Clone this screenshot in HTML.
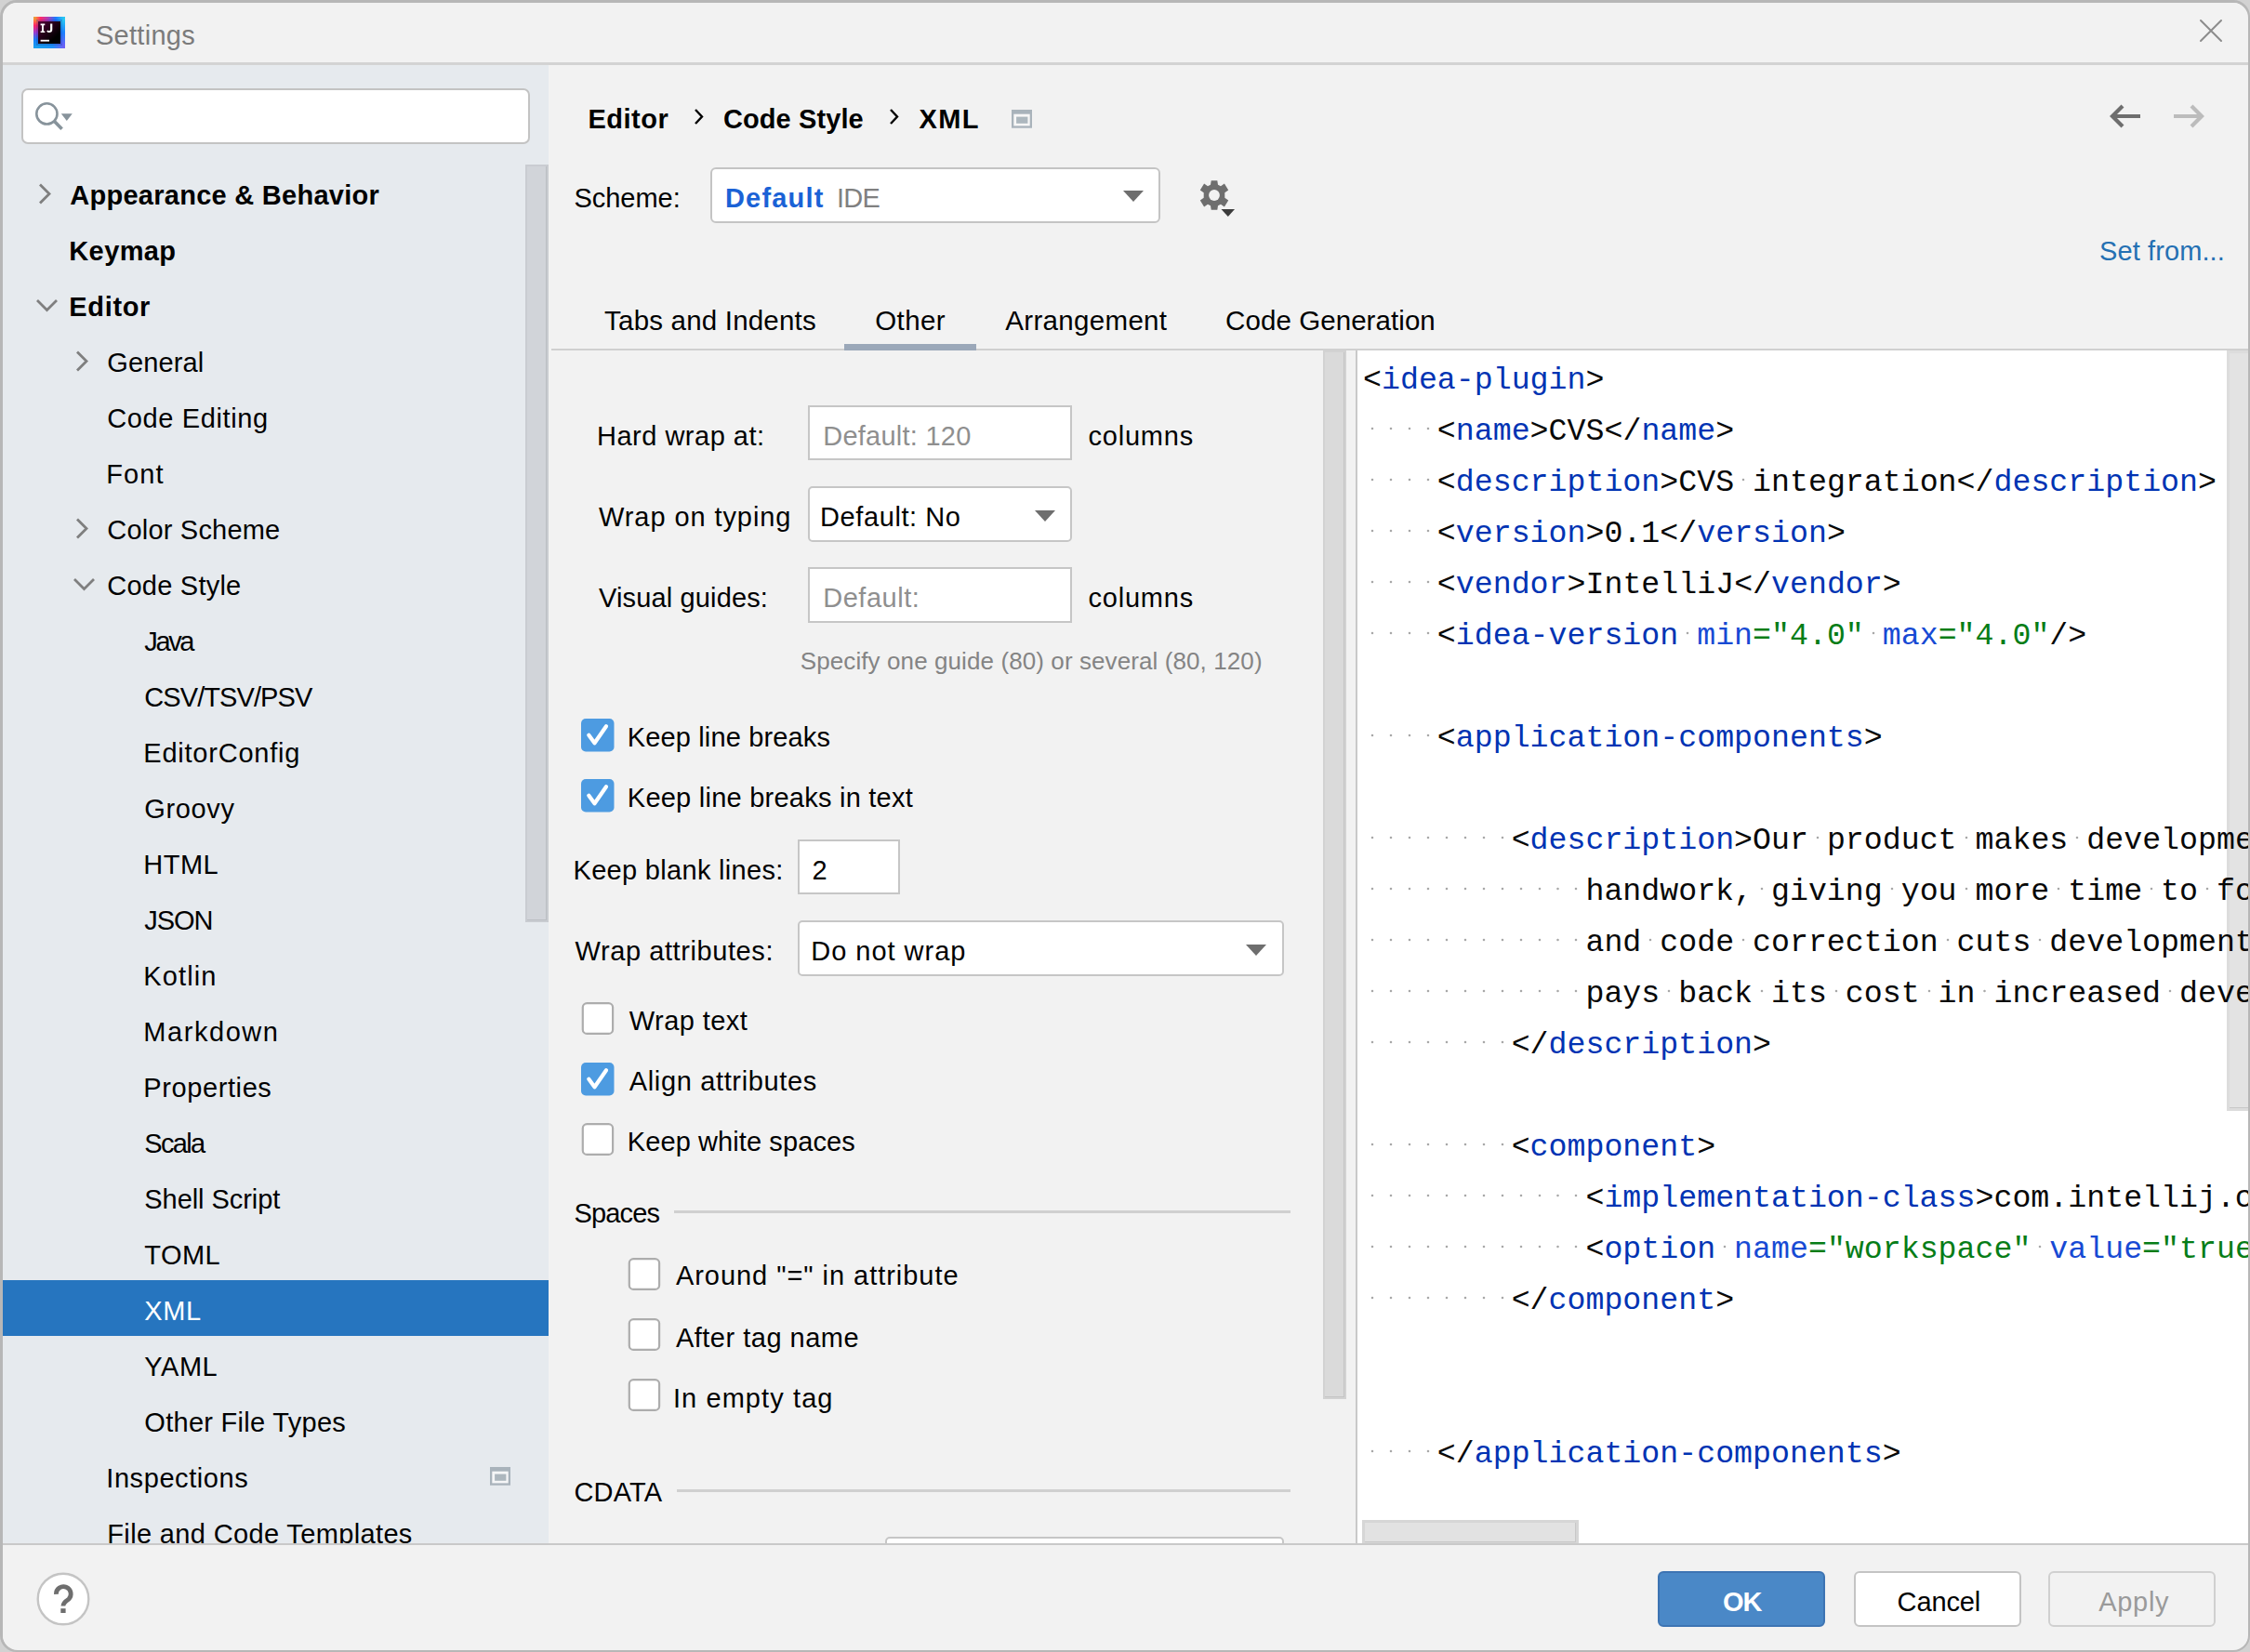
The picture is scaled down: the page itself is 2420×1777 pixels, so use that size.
<!DOCTYPE html>
<html><head><meta charset="utf-8"><title>Settings</title>
<style>
html,body{margin:0;padding:0;width:2420px;height:1777px;overflow:hidden;background:#d2d2d2;}
#win{position:absolute;left:0;top:0;width:2420px;height:1777px;box-sizing:border-box;border:3px solid #b7b7b7;border-radius:18px;background:#f2f2f2}
.t{position:absolute;line-height:1;white-space:pre;font-family:'Liberation Sans', sans-serif}
.d{display:inline-block;width:1ch;height:33px;vertical-align:top;background:radial-gradient(circle at 50% 13px,#a8a8a8 0,#a8a8a8 0.8px,rgba(168,168,168,0) 1.7px)}
.c{position:absolute;left:6px;line-height:1;white-space:pre;font-family:'Liberation Mono', monospace;font-size:33.25px}
</style></head><body>
<div id="win"></div>
<div style="position:absolute;left:3px;top:3px;width:2415px;height:64px;background:#f2f2f2;border-radius:16px 16px 0 0"></div>
<div style="position:absolute;left:3px;top:67px;width:2415px;height:3px;background:#d3d3d3"></div>
<svg style="position:absolute;left:36px;top:18px" width="34" height="34" viewBox="0 0 34 34"><defs>
<linearGradient id="gt" x1="0" y1="0" x2="1" y2="0"><stop offset="0" stop-color="#ffb81c"/><stop offset="0.22" stop-color="#ff2a6a"/><stop offset="0.45" stop-color="#b13bb5"/><stop offset="0.7" stop-color="#1b78ff"/><stop offset="1" stop-color="#2ad8f0"/></linearGradient>
<linearGradient id="gl" x1="0" y1="0" x2="0" y2="1"><stop offset="0" stop-color="#ffb81c"/><stop offset="0.28" stop-color="#ff2468"/><stop offset="0.5" stop-color="#9a3bd0"/><stop offset="0.72" stop-color="#1a7cf8"/><stop offset="1" stop-color="#17a3ee"/></linearGradient>
<linearGradient id="gb" x1="0" y1="0" x2="1" y2="0"><stop offset="0" stop-color="#17a3ee"/><stop offset="0.6" stop-color="#1d8ff5"/><stop offset="1" stop-color="#7a5af5"/></linearGradient>
<linearGradient id="gr" x1="0" y1="0" x2="0" y2="1"><stop offset="0" stop-color="#2ad8f0"/><stop offset="0.5" stop-color="#1a80ff"/><stop offset="1" stop-color="#7a5af5"/></linearGradient>
<linearGradient id="gk" x1="0" y1="0" x2="1" y2="1"><stop offset="0" stop-color="#520038"/><stop offset="0.75" stop-color="#000"/></linearGradient></defs>
<rect x="0" y="0" width="34" height="34" fill="#3a7cf0"/><polygon points="0,0 34,0 29,5 5,5" fill="url(#gt)"/><polygon points="0,0 5,5 5,29 0,34" fill="url(#gl)"/>
<polygon points="0,34 5,29 29,29 34,34" fill="url(#gb)"/><polygon points="34,0 29,5 29,29 34,34" fill="url(#gr)"/>
<rect x="4" y="4" width="26" height="26" fill="none" stroke="rgba(0,20,120,0.18)" stroke-width="2"/>
<rect x="5" y="5" width="24" height="24" fill="url(#gk)"/>
<path d="M7.6 7.6 H12.3 V9.2 H10.9 V15.4 H12.3 V17 H7.6 V15.4 H9.0 V9.2 H7.6 Z" fill="#fff"/>
<path d="M18.1 7.6 H20.3 V13.8 Q20.3 17.1 16.9 17.1 Q15.0 17.1 14.1 15.6 L15.5 14.6 Q16.0 15.3 16.9 15.3 Q18.1 15.3 18.1 13.6 Z" fill="#fff"/>
<rect x="7.6" y="24.8" width="9.4" height="1.8" fill="#fff"/></svg>
<div class="t" style="left:103.00px;top:24px;font-size:29px;font-weight:400;color:#7b7b7b;font-family:'Liberation Sans', sans-serif;letter-spacing:0.271px;">Settings</div>
<svg style="position:absolute;left:2364px;top:19px" width="28" height="28" viewBox="0 0 28 28"><path d="M3 3 L25 25 M25 3 L3 25" stroke="#8c8c8c" stroke-width="2" stroke-linecap="round"/></svg>
<div style="position:absolute;left:3px;top:70px;width:587px;height:1590px;background:#e6eaee"></div>
<div style="position:absolute;left:23px;top:95px;width:547px;height:60px;background:#fff;border:2.5px solid #c3c3c3;border-radius:7px;box-sizing:border-box"></div>
<svg style="position:absolute;left:34px;top:106px" width="48" height="40" viewBox="0 0 48 40"><circle cx="16.4" cy="16.4" r="11.1" fill="none" stroke="#87939b" stroke-width="2.6"/><path d="M24.5 24.5 L32.6 32.8" stroke="#87939b" stroke-width="3.6"/><path d="M31.8 16.2 L43.8 16.2 L37.8 24 Z" fill="#87939b"/></svg>
<div style="position:absolute;left:565px;top:177px;width:25px;height:815px;background:#d1d4d9;border:2px solid #c9ccd1;box-sizing:border-box"></div>
<div style="position:absolute;left:567px;top:989px;width:21px;height:1px;background:#babec2"></div>
<div style="position:absolute;left:587px;top:179px;width:1px;height:811px;background:#babec2"></div>
<div style="position:absolute;left:3px;top:1377px;width:587px;height:60px;background:#2675bf"></div>
<div style="position:absolute;left:0;top:70px;width:590px;height:1590px;overflow:hidden">
<div class="t" style="left:75.30px;top:126px;font-size:29px;font-weight:700;color:#000;font-family:'Liberation Sans', sans-serif;letter-spacing:0.265px;">Appearance &amp; Behavior</div>
<svg style="position:absolute;left:40px;top:126px" width="18" height="26" viewBox="0 0 18 26"><path d="M3 2.5 L13 12.5 L3 22.5" fill="none" stroke="#7f7f7f" stroke-width="2.8"/></svg>
<div class="t" style="left:74.30px;top:186px;font-size:29px;font-weight:700;color:#000;font-family:'Liberation Sans', sans-serif;letter-spacing:0.380px;">Keymap</div>
<div class="t" style="left:74.30px;top:246px;font-size:29px;font-weight:700;color:#000;font-family:'Liberation Sans', sans-serif;letter-spacing:0.660px;">Editor</div>
<svg style="position:absolute;left:38px;top:250px" width="26" height="18" viewBox="0 0 26 18"><path d="M2 3 L12.5 13.5 L23 3" fill="none" stroke="#7f7f7f" stroke-width="2.8"/></svg>
<div class="t" style="left:115.30px;top:306px;font-size:29px;font-weight:400;color:#000;font-family:'Liberation Sans', sans-serif;letter-spacing:0.133px;">General</div>
<svg style="position:absolute;left:80px;top:306px" width="18" height="26" viewBox="0 0 18 26"><path d="M3 2.5 L13 12.5 L3 22.5" fill="none" stroke="#7f7f7f" stroke-width="2.8"/></svg>
<div class="t" style="left:115.30px;top:366px;font-size:29px;font-weight:400;color:#000;font-family:'Liberation Sans', sans-serif;letter-spacing:0.618px;">Code Editing</div>
<div class="t" style="left:114.30px;top:426px;font-size:29px;font-weight:400;color:#000;font-family:'Liberation Sans', sans-serif;letter-spacing:1.067px;">Font</div>
<div class="t" style="left:115.30px;top:486px;font-size:29px;font-weight:400;color:#000;font-family:'Liberation Sans', sans-serif;letter-spacing:0.200px;">Color Scheme</div>
<svg style="position:absolute;left:80px;top:486px" width="18" height="26" viewBox="0 0 18 26"><path d="M3 2.5 L13 12.5 L3 22.5" fill="none" stroke="#7f7f7f" stroke-width="2.8"/></svg>
<div class="t" style="left:115.30px;top:546px;font-size:29px;font-weight:400;color:#000;font-family:'Liberation Sans', sans-serif;letter-spacing:0.233px;">Code Style</div>
<svg style="position:absolute;left:78px;top:550px" width="26" height="18" viewBox="0 0 26 18"><path d="M2 3 L12.5 13.5 L23 3" fill="none" stroke="#7f7f7f" stroke-width="2.8"/></svg>
<div class="t" style="left:155.30px;top:606px;font-size:29px;font-weight:400;color:#000;font-family:'Liberation Sans', sans-serif;letter-spacing:-2.400px;">Java</div>
<div class="t" style="left:155.30px;top:666px;font-size:29px;font-weight:400;color:#000;font-family:'Liberation Sans', sans-serif;letter-spacing:-0.920px;">CSV/TSV/PSV</div>
<div class="t" style="left:154.30px;top:726px;font-size:29px;font-weight:400;color:#000;font-family:'Liberation Sans', sans-serif;letter-spacing:0.773px;">EditorConfig</div>
<div class="t" style="left:155.30px;top:786px;font-size:29px;font-weight:400;color:#000;font-family:'Liberation Sans', sans-serif;letter-spacing:0.640px;">Groovy</div>
<div class="t" style="left:154.30px;top:846px;font-size:29px;font-weight:400;color:#000;font-family:'Liberation Sans', sans-serif;letter-spacing:0.467px;">HTML</div>
<div class="t" style="left:155.30px;top:906px;font-size:29px;font-weight:400;color:#000;font-family:'Liberation Sans', sans-serif;letter-spacing:-1.067px;">JSON</div>
<div class="t" style="left:154.30px;top:966px;font-size:29px;font-weight:400;color:#000;font-family:'Liberation Sans', sans-serif;letter-spacing:1.100px;">Kotlin</div>
<div class="t" style="left:154.30px;top:1026px;font-size:29px;font-weight:400;color:#000;font-family:'Liberation Sans', sans-serif;letter-spacing:1.557px;">Markdown</div>
<div class="t" style="left:154.30px;top:1086px;font-size:29px;font-weight:400;color:#000;font-family:'Liberation Sans', sans-serif;letter-spacing:0.600px;">Properties</div>
<div class="t" style="left:155.30px;top:1146px;font-size:29px;font-weight:400;color:#000;font-family:'Liberation Sans', sans-serif;letter-spacing:-1.650px;">Scala</div>
<div class="t" style="left:155.30px;top:1206px;font-size:29px;font-weight:400;color:#000;font-family:'Liberation Sans', sans-serif;letter-spacing:-0.064px;">Shell Script</div>
<div class="t" style="left:155.30px;top:1266px;font-size:29px;font-weight:400;color:#000;font-family:'Liberation Sans', sans-serif;letter-spacing:0.467px;">TOML</div>
<div class="t" style="left:155.30px;top:1326px;font-size:29px;font-weight:400;color:#fff;font-family:'Liberation Sans', sans-serif;letter-spacing:0.600px;">XML</div>
<div class="t" style="left:155.30px;top:1386px;font-size:29px;font-weight:400;color:#000;font-family:'Liberation Sans', sans-serif;letter-spacing:0.533px;">YAML</div>
<div class="t" style="left:155.30px;top:1446px;font-size:29px;font-weight:400;color:#000;font-family:'Liberation Sans', sans-serif;letter-spacing:0.287px;">Other File Types</div>
<div class="t" style="left:114.30px;top:1506px;font-size:29px;font-weight:400;color:#000;font-family:'Liberation Sans', sans-serif;letter-spacing:0.570px;">Inspections</div>
<div class="t" style="left:115.30px;top:1566px;font-size:29px;font-weight:400;color:#000;font-family:'Liberation Sans', sans-serif;letter-spacing:0.355px;">File and Code Templates</div>
</div>
<svg style="position:absolute;left:526.5px;top:1578px" width="22" height="20" viewBox="0 0 22 20"><rect x="0" y="0" width="22" height="19.7" fill="#a9b3bb"/><rect x="2.3" y="4.7" width="17.4" height="12.7" fill="#f5f6f7"/><rect x="5.1" y="7.6" width="12.3" height="7.2" fill="#adb7be"/></svg>
<div style="position:absolute;left:590px;top:70px;width:1828px;height:1590px;background:#f2f2f2"></div>
<div class="t" style="left:632.40px;top:114px;font-size:29px;font-weight:700;color:#000;font-family:'Liberation Sans', sans-serif;letter-spacing:0.500px;">Editor</div>
<svg style="position:absolute;left:745px;top:116px" width="14" height="20" viewBox="0 0 14 20"><path d="M3 2 L10 9.5 L3 17" fill="none" stroke="#000" stroke-width="2.4"/></svg>
<div class="t" style="left:777.90px;top:114px;font-size:29px;font-weight:700;color:#000;font-family:'Liberation Sans', sans-serif;letter-spacing:0.100px;">Code Style</div>
<svg style="position:absolute;left:955px;top:116px" width="14" height="20" viewBox="0 0 14 20"><path d="M3 2 L10 9.5 L3 17" fill="none" stroke="#000" stroke-width="2.4"/></svg>
<div class="t" style="left:988.40px;top:114px;font-size:29px;font-weight:700;color:#000;font-family:'Liberation Sans', sans-serif;letter-spacing:1.400px;">XML</div>
<svg style="position:absolute;left:1088px;top:118px" width="22" height="20" viewBox="0 0 22 20"><rect x="0" y="0" width="22" height="19.7" fill="#a9b3bb"/><rect x="2.3" y="4.7" width="17.4" height="12.7" fill="#f7f7f7"/><rect x="5.1" y="7.6" width="12.3" height="7.2" fill="#adb7be"/></svg>
<svg style="position:absolute;left:2268px;top:110px" width="38" height="30" viewBox="0 0 38 30"><path d="M34 15 L5 15 M15 4 L4 15 L15 26" fill="none" stroke="#6e6e6e" stroke-width="4.2"/></svg>
<svg style="position:absolute;left:2335px;top:110px" width="38" height="30" viewBox="0 0 38 30"><path d="M3 15 L32 15 M22 4 L33 15 L22 26" fill="none" stroke="#bcbcbc" stroke-width="4.2"/></svg>
<div class="t" style="left:617.40px;top:199px;font-size:29px;font-weight:400;color:#000;font-family:'Liberation Sans', sans-serif;letter-spacing:-0.017px;">Scheme:</div>
<div style="position:absolute;left:764px;top:180px;width:484px;height:60px;background:#fff;border:2px solid #c4c4c4;border-radius:6px;box-sizing:border-box"></div>
<div class="t" style="left:780.00px;top:199px;font-size:29px;font-weight:700;color:#1a62d6;font-family:'Liberation Sans', sans-serif;letter-spacing:1.167px;">Default</div>
<div class="t" style="left:900.00px;top:199px;font-size:29px;font-weight:400;color:#808080;font-family:'Liberation Sans', sans-serif;letter-spacing:-0.750px;">IDE</div>
<svg style="position:absolute;left:1207px;top:204px" width="24" height="14" viewBox="0 0 24 14"><path d="M1 1 L23 1 L12 13 Z" fill="#6e6e6e"/></svg>
<svg style="position:absolute;left:1288px;top:192px" width="42" height="42" viewBox="0 0 42 42"><g transform="translate(18,18)" fill="#6e6e6e">
<path d="M-3.3 -15.8 L3.3 -15.8 L4 -11.2 L7 -9.7 L10.9 -12.6 L15.2 -5.6 L11.3 -2.8 L11.3 2.8 L15.2 5.6 L10.9 12.6 L7 9.7 L4 11.2 L3.3 15.8 L-3.3 15.8 L-4 11.2 L-7 9.7 L-10.9 12.6 L-15.2 5.6 L-11.3 2.8 L-11.3 -2.8 L-15.2 -5.6 L-10.9 -12.6 L-7 -9.7 L-4 -11.2 Z"/>
</g><circle cx="18" cy="18" r="5.9" fill="#f2f2f2"/><path d="M25.5 33 L40 33 L32.8 41 Z" fill="#3c3c3c"/></svg>
<div class="t" style="left:2258.00px;top:256px;font-size:29px;font-weight:400;color:#2470b3;font-family:'Liberation Sans', sans-serif;letter-spacing:0.100px;">Set from...</div>
<div class="t" style="left:650.10px;top:330px;font-size:29.5px;font-weight:400;color:#000;font-family:'Liberation Sans', sans-serif;letter-spacing:0.193px;">Tabs and Indents</div>
<div class="t" style="left:941.20px;top:330px;font-size:29.5px;font-weight:400;color:#000;font-family:'Liberation Sans', sans-serif;letter-spacing:0.425px;">Other</div>
<div class="t" style="left:1081.30px;top:330px;font-size:29.5px;font-weight:400;color:#000;font-family:'Liberation Sans', sans-serif;letter-spacing:0.320px;">Arrangement</div>
<div class="t" style="left:1318.10px;top:330px;font-size:29.5px;font-weight:400;color:#000;font-family:'Liberation Sans', sans-serif;letter-spacing:0.071px;">Code Generation</div>
<div style="position:absolute;left:593px;top:375px;width:1825px;height:2px;background:#d0d0d0"></div>
<div style="position:absolute;left:908px;top:370px;width:142px;height:7px;background:#9ba8b9"></div>
<div class="t" style="left:642.00px;top:455px;font-size:29px;font-weight:400;color:#000;font-family:'Liberation Sans', sans-serif;letter-spacing:0.500px;">Hard wrap at:</div>
<div style="position:absolute;left:869px;top:436px;width:284px;height:59px;background:#fff;border:2px solid #c6c6c6;box-sizing:border-box;"></div>
<div class="t" style="left:885.20px;top:455px;font-size:29px;font-weight:400;color:#8f8f8f;font-family:'Liberation Sans', sans-serif;letter-spacing:0.245px;">Default: 120</div>
<div class="t" style="left:1170.50px;top:455px;font-size:29px;font-weight:400;color:#000;font-family:'Liberation Sans', sans-serif;letter-spacing:0.783px;">columns</div>
<div class="t" style="left:644.00px;top:542px;font-size:29px;font-weight:400;color:#000;font-family:'Liberation Sans', sans-serif;letter-spacing:0.915px;">Wrap on typing</div>
<div style="position:absolute;left:869px;top:523px;width:284px;height:60px;background:#fff;border:2px solid #c6c6c6;box-sizing:border-box;border-radius:5px;"></div>
<div class="t" style="left:882.10px;top:542px;font-size:29px;font-weight:400;color:#000;font-family:'Liberation Sans', sans-serif;letter-spacing:0.580px;">Default: No</div>
<svg style="position:absolute;left:1112px;top:548px" width="24" height="14" viewBox="0 0 24 14"><path d="M1 1 L23 1 L12 13 Z" fill="#6e6e6e"/></svg>
<div class="t" style="left:644.00px;top:629px;font-size:29px;font-weight:400;color:#000;font-family:'Liberation Sans', sans-serif;letter-spacing:0.146px;">Visual guides:</div>
<div style="position:absolute;left:869px;top:610px;width:284px;height:60px;background:#fff;border:2px solid #c6c6c6;box-sizing:border-box;"></div>
<div class="t" style="left:885.20px;top:629px;font-size:29px;font-weight:400;color:#8f8f8f;font-family:'Liberation Sans', sans-serif;letter-spacing:0.543px;">Default:</div>
<div class="t" style="left:1170.50px;top:629px;font-size:29px;font-weight:400;color:#000;font-family:'Liberation Sans', sans-serif;letter-spacing:0.783px;">columns</div>
<div class="t" style="left:860.80px;top:698px;font-size:26px;font-weight:400;color:#848484;font-family:'Liberation Sans', sans-serif;letter-spacing:0.093px;">Specify one guide (80) or several (80, 120)</div>
<svg style="position:absolute;left:625px;top:773px" width="36" height="36" viewBox="0 0 36 36"><rect x="0" y="0" width="35.5" height="35.5" rx="5" fill="#4d9be1"/><path d="M8.3 17.8 L14.5 26.2 L27 8.3" fill="none" stroke="#fff" stroke-width="4.2" stroke-linecap="round" stroke-linejoin="round"/></svg>
<div class="t" style="left:674.80px;top:779px;font-size:29px;font-weight:400;color:#000;font-family:'Liberation Sans', sans-serif;letter-spacing:0.140px;">Keep line breaks</div>
<svg style="position:absolute;left:625px;top:838px" width="36" height="36" viewBox="0 0 36 36"><rect x="0" y="0" width="35.5" height="35.5" rx="5" fill="#4d9be1"/><path d="M8.3 17.8 L14.5 26.2 L27 8.3" fill="none" stroke="#fff" stroke-width="4.2" stroke-linecap="round" stroke-linejoin="round"/></svg>
<div class="t" style="left:674.80px;top:844px;font-size:29px;font-weight:400;color:#000;font-family:'Liberation Sans', sans-serif;letter-spacing:0.239px;">Keep line breaks in text</div>
<div class="t" style="left:616.50px;top:922px;font-size:29px;font-weight:400;color:#000;font-family:'Liberation Sans', sans-serif;letter-spacing:0.312px;">Keep blank lines:</div>
<div style="position:absolute;left:858px;top:903px;width:110px;height:59px;background:#fff;border:2px solid #c6c6c6;box-sizing:border-box;"></div>
<div class="t" style="left:873.50px;top:922px;font-size:29px;font-weight:400;color:#000;font-family:'Liberation Sans', sans-serif;">2</div>
<div class="t" style="left:618.50px;top:1009px;font-size:29px;font-weight:400;color:#000;font-family:'Liberation Sans', sans-serif;letter-spacing:0.587px;">Wrap attributes:</div>
<div style="position:absolute;left:858px;top:990px;width:523px;height:60px;background:#fff;border:2px solid #c6c6c6;box-sizing:border-box;border-radius:5px;"></div>
<div class="t" style="left:872.30px;top:1009px;font-size:29px;font-weight:400;color:#000;font-family:'Liberation Sans', sans-serif;letter-spacing:0.970px;">Do not wrap</div>
<svg style="position:absolute;left:1339px;top:1015px" width="24" height="14" viewBox="0 0 24 14"><path d="M1 1 L23 1 L12 13 Z" fill="#6e6e6e"/></svg>
<svg style="position:absolute;left:625px;top:1078px" width="36" height="36" viewBox="0 0 36 36"><rect x="1.8" y="1.1" width="32.3" height="32.8" rx="4.5" fill="#fff" stroke="#adadad" stroke-width="2.2"/></svg>
<div class="t" style="left:676.80px;top:1084px;font-size:29px;font-weight:400;color:#000;font-family:'Liberation Sans', sans-serif;letter-spacing:0.438px;">Wrap text</div>
<svg style="position:absolute;left:625px;top:1143px" width="36" height="36" viewBox="0 0 36 36"><rect x="0" y="0" width="35.5" height="35.5" rx="5" fill="#4d9be1"/><path d="M8.3 17.8 L14.5 26.2 L27 8.3" fill="none" stroke="#fff" stroke-width="4.2" stroke-linecap="round" stroke-linejoin="round"/></svg>
<div class="t" style="left:676.80px;top:1149px;font-size:29px;font-weight:400;color:#000;font-family:'Liberation Sans', sans-serif;letter-spacing:0.640px;">Align attributes</div>
<svg style="position:absolute;left:625px;top:1208px" width="36" height="36" viewBox="0 0 36 36"><rect x="1.8" y="1.1" width="32.3" height="32.8" rx="4.5" fill="#fff" stroke="#adadad" stroke-width="2.2"/></svg>
<div class="t" style="left:674.80px;top:1214px;font-size:29px;font-weight:400;color:#000;font-family:'Liberation Sans', sans-serif;letter-spacing:0.094px;">Keep white spaces</div>
<div class="t" style="left:617.50px;top:1291px;font-size:29px;font-weight:400;color:#000;font-family:'Liberation Sans', sans-serif;letter-spacing:-0.840px;">Spaces</div>
<div style="position:absolute;left:725px;top:1302px;width:663px;height:3px;background:#d0d0d0"></div>
<svg style="position:absolute;left:675px;top:1353px" width="36" height="36" viewBox="0 0 36 36"><rect x="1.8" y="1.1" width="32.3" height="32.8" rx="4.5" fill="#fff" stroke="#adadad" stroke-width="2.2"/></svg>
<div class="t" style="left:726.90px;top:1358px;font-size:29px;font-weight:400;color:#000;font-family:'Liberation Sans', sans-serif;letter-spacing:0.959px;">Around &quot;=&quot; in attribute</div>
<svg style="position:absolute;left:675px;top:1418px" width="36" height="36" viewBox="0 0 36 36"><rect x="1.8" y="1.1" width="32.3" height="32.8" rx="4.5" fill="#fff" stroke="#adadad" stroke-width="2.2"/></svg>
<div class="t" style="left:726.90px;top:1425px;font-size:29px;font-weight:400;color:#000;font-family:'Liberation Sans', sans-serif;letter-spacing:0.500px;">After tag name</div>
<svg style="position:absolute;left:675px;top:1483px" width="36" height="36" viewBox="0 0 36 36"><rect x="1.8" y="1.1" width="32.3" height="32.8" rx="4.5" fill="#fff" stroke="#adadad" stroke-width="2.2"/></svg>
<div class="t" style="left:723.90px;top:1490px;font-size:29px;font-weight:400;color:#000;font-family:'Liberation Sans', sans-serif;letter-spacing:1.091px;">In empty tag</div>
<div class="t" style="left:617.50px;top:1591px;font-size:29px;font-weight:400;color:#000;font-family:'Liberation Sans', sans-serif;letter-spacing:0.125px;">CDATA</div>
<div style="position:absolute;left:728px;top:1602px;width:660px;height:3px;background:#d0d0d0"></div>
<div style="position:absolute;left:952px;top:1653px;width:429px;height:47px;background:#fff;border:2px solid #c6c6c6;border-radius:5px;box-sizing:border-box"></div>
<div style="position:absolute;left:1423px;top:377px;width:25px;height:1128px;background:#dadada;border:2px solid #d2d2d2;box-sizing:border-box"></div>
<div style="position:absolute;left:1425px;top:1502px;width:21px;height:1px;background:#c4c4c4"></div>
<div style="position:absolute;left:1445px;top:379px;width:1px;height:1124px;background:#c4c4c4"></div>
<div style="position:absolute;left:1458px;top:377px;width:2px;height:1283px;background:#c9c9c9"></div>
<div style="position:absolute;left:1460px;top:377px;width:958px;height:1283px;background:#fff;overflow:hidden">
<div style="position:absolute;left:935px;top:0px;width:27px;height:818px;background:#e3e3e3;border:3px solid #dcdcdc;box-sizing:border-box"></div>
<div style="position:absolute;left:938px;top:814px;width:21px;height:1px;background:#c8c8c8"></div>
<div style="position:absolute;left:958px;top:3px;width:1px;height:812px;background:#c8c8c8"></div>
<div style="position:absolute;left:5px;top:1258px;width:233px;height:27px;background:#e2e2e2;border:3px solid #d6d6d6;box-sizing:border-box"></div>
<div style="position:absolute;left:8px;top:1281px;width:227px;height:1px;background:#c8c8c8"></div>
<div style="position:absolute;left:234px;top:1261px;width:1px;height:21px;background:#c8c8c8"></div>
<div class="c" style="top:16px"><span style="color:#080808">&lt;</span><span style="color:#0033b3">idea-plugin</span><span style="color:#080808">&gt;</span></div>
<div class="c" style="top:71px"><span class="d"></span><span class="d"></span><span class="d"></span><span class="d"></span><span style="color:#080808">&lt;</span><span style="color:#0033b3">name</span><span style="color:#080808">&gt;</span><span style="color:#080808">CVS</span><span style="color:#080808">&lt;/</span><span style="color:#0033b3">name</span><span style="color:#080808">&gt;</span></div>
<div class="c" style="top:126px"><span class="d"></span><span class="d"></span><span class="d"></span><span class="d"></span><span style="color:#080808">&lt;</span><span style="color:#0033b3">description</span><span style="color:#080808">&gt;</span><span style="color:#080808">CVS<span class="d"></span>integration</span><span style="color:#080808">&lt;/</span><span style="color:#0033b3">description</span><span style="color:#080808">&gt;</span></div>
<div class="c" style="top:181px"><span class="d"></span><span class="d"></span><span class="d"></span><span class="d"></span><span style="color:#080808">&lt;</span><span style="color:#0033b3">version</span><span style="color:#080808">&gt;</span><span style="color:#080808">0.1</span><span style="color:#080808">&lt;/</span><span style="color:#0033b3">version</span><span style="color:#080808">&gt;</span></div>
<div class="c" style="top:236px"><span class="d"></span><span class="d"></span><span class="d"></span><span class="d"></span><span style="color:#080808">&lt;</span><span style="color:#0033b3">vendor</span><span style="color:#080808">&gt;</span><span style="color:#080808">IntelliJ</span><span style="color:#080808">&lt;/</span><span style="color:#0033b3">vendor</span><span style="color:#080808">&gt;</span></div>
<div class="c" style="top:291px"><span class="d"></span><span class="d"></span><span class="d"></span><span class="d"></span><span style="color:#080808">&lt;</span><span style="color:#0033b3">idea-version</span><span class="d"></span><span style="color:#174ad4">min</span><span style="color:#067d17">=&quot;4.0&quot;</span><span class="d"></span><span style="color:#174ad4">max</span><span style="color:#067d17">=&quot;4.0&quot;</span><span style="color:#080808">/&gt;</span></div>
<div class="c" style="top:346px"></div>
<div class="c" style="top:401px"><span class="d"></span><span class="d"></span><span class="d"></span><span class="d"></span><span style="color:#080808">&lt;</span><span style="color:#0033b3">application-components</span><span style="color:#080808">&gt;</span></div>
<div class="c" style="top:456px"></div>
<div class="c" style="top:511px"><span class="d"></span><span class="d"></span><span class="d"></span><span class="d"></span><span class="d"></span><span class="d"></span><span class="d"></span><span class="d"></span><span style="color:#080808">&lt;</span><span style="color:#0033b3">description</span><span style="color:#080808">&gt;</span><span style="color:#080808">Our<span class="d"></span>product<span class="d"></span>makes<span class="d"></span>development<span class="d"></span>a<span class="d"></span>real<span class="d"></span>pleasure</span></div>
<div class="c" style="top:566px"><span class="d"></span><span class="d"></span><span class="d"></span><span class="d"></span><span class="d"></span><span class="d"></span><span class="d"></span><span class="d"></span><span class="d"></span><span class="d"></span><span class="d"></span><span class="d"></span><span style="color:#080808">handwork,<span class="d"></span>giving<span class="d"></span>you<span class="d"></span>more<span class="d"></span>time<span class="d"></span>to<span class="d"></span>focus<span class="d"></span>on</span></div>
<div class="c" style="top:621px"><span class="d"></span><span class="d"></span><span class="d"></span><span class="d"></span><span class="d"></span><span class="d"></span><span class="d"></span><span class="d"></span><span class="d"></span><span class="d"></span><span class="d"></span><span class="d"></span><span style="color:#080808">and<span class="d"></span>code<span class="d"></span>correction<span class="d"></span>cuts<span class="d"></span>development<span class="d"></span>time</span></div>
<div class="c" style="top:676px"><span class="d"></span><span class="d"></span><span class="d"></span><span class="d"></span><span class="d"></span><span class="d"></span><span class="d"></span><span class="d"></span><span class="d"></span><span class="d"></span><span class="d"></span><span class="d"></span><span style="color:#080808">pays<span class="d"></span>back<span class="d"></span>its<span class="d"></span>cost<span class="d"></span>in<span class="d"></span>increased<span class="d"></span>developer</span></div>
<div class="c" style="top:731px"><span class="d"></span><span class="d"></span><span class="d"></span><span class="d"></span><span class="d"></span><span class="d"></span><span class="d"></span><span class="d"></span><span style="color:#080808">&lt;/</span><span style="color:#0033b3">description</span><span style="color:#080808">&gt;</span></div>
<div class="c" style="top:786px"></div>
<div class="c" style="top:841px"><span class="d"></span><span class="d"></span><span class="d"></span><span class="d"></span><span class="d"></span><span class="d"></span><span class="d"></span><span class="d"></span><span style="color:#080808">&lt;</span><span style="color:#0033b3">component</span><span style="color:#080808">&gt;</span></div>
<div class="c" style="top:896px"><span class="d"></span><span class="d"></span><span class="d"></span><span class="d"></span><span class="d"></span><span class="d"></span><span class="d"></span><span class="d"></span><span class="d"></span><span class="d"></span><span class="d"></span><span class="d"></span><span style="color:#080808">&lt;</span><span style="color:#0033b3">implementation-class</span><span style="color:#080808">&gt;</span><span style="color:#080808">com.intellij.cvsSupport2</span></div>
<div class="c" style="top:951px"><span class="d"></span><span class="d"></span><span class="d"></span><span class="d"></span><span class="d"></span><span class="d"></span><span class="d"></span><span class="d"></span><span class="d"></span><span class="d"></span><span class="d"></span><span class="d"></span><span style="color:#080808">&lt;</span><span style="color:#0033b3">option</span><span class="d"></span><span style="color:#174ad4">name</span><span style="color:#067d17">=&quot;workspace&quot;</span><span class="d"></span><span style="color:#174ad4">value</span><span style="color:#067d17">=&quot;true&quot;/&gt;</span></div>
<div class="c" style="top:1006px"><span class="d"></span><span class="d"></span><span class="d"></span><span class="d"></span><span class="d"></span><span class="d"></span><span class="d"></span><span class="d"></span><span style="color:#080808">&lt;/</span><span style="color:#0033b3">component</span><span style="color:#080808">&gt;</span></div>
<div class="c" style="top:1061px"></div>
<div class="c" style="top:1116px"></div>
<div class="c" style="top:1171px"><span class="d"></span><span class="d"></span><span class="d"></span><span class="d"></span><span style="color:#080808">&lt;/</span><span style="color:#0033b3">application-components</span><span style="color:#080808">&gt;</span></div>
</div>
<div style="position:absolute;left:3px;top:1661px;width:2415px;height:114px;background:#f2f2f2;border-radius:0 0 16px 16px"></div>
<div style="position:absolute;left:3px;top:1660px;width:2415px;height:2px;background:#c9c9c9"></div>
<svg style="position:absolute;left:38px;top:1690px" width="60" height="60" viewBox="0 0 60 60"><circle cx="30" cy="30" r="27.3" fill="#fff" stroke="#c4c4c4" stroke-width="2.4"/></svg>
<svg style="position:absolute;left:38px;top:1690px" width="60" height="60" viewBox="0 0 60 60"><path d="M22.4 24.8 A7.9 7.9 0 1 1 35.8 30.2 Q29.9 34 29.9 37.6" fill="none" stroke="#6e6e6e" stroke-width="4.8"/><rect x="27.3" y="40.2" width="5.3" height="4.8" fill="#6e6e6e"/></svg>
<div style="position:absolute;left:1783px;top:1690px;width:180px;height:60px;background:#4a88c7;border:2px solid #3d74b3;border-radius:6px;box-sizing:border-box"></div>
<div class="t" style="left:1852.90px;top:1709px;font-size:29px;font-weight:700;color:#fff;font-family:'Liberation Sans', sans-serif;letter-spacing:-1.000px;">OK</div>
<div style="position:absolute;left:1994px;top:1690px;width:180px;height:60px;background:#fff;border:2px solid #c4c4c4;border-radius:6px;box-sizing:border-box"></div>
<div class="t" style="left:2040.60px;top:1709px;font-size:29px;font-weight:400;color:#000;font-family:'Liberation Sans', sans-serif;letter-spacing:-0.120px;">Cancel</div>
<div style="position:absolute;left:2203px;top:1690px;width:180px;height:60px;background:#f2f2f2;border:2px solid #d0d0d0;border-radius:6px;box-sizing:border-box"></div>
<div class="t" style="left:2257.20px;top:1709px;font-size:29px;font-weight:400;color:#9a9a9a;font-family:'Liberation Sans', sans-serif;letter-spacing:0.700px;">Apply</div>
</body></html>
